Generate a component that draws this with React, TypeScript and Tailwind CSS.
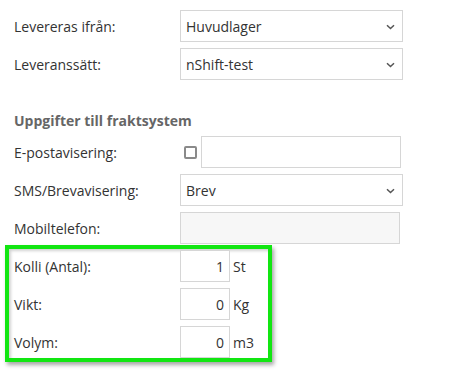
import React from 'react';

const font = { fontFamily: '"Open Sans", "Liberation Sans", sans-serif' };

function Chevron() {
  return (
    <svg width="9" height="6" viewBox="0 0 9 6" className="absolute right-[7px] top-[13px]">
      <path d="M1 1.2 L4.5 4.5 L8 1.2" fill="none" stroke="#555" strokeWidth="1.5" />
    </svg>
  );
}

function SelectBox({ value }: { value: string }) {
  return (
    <div className="relative flex h-8 w-[223px] items-center border border-[#d6d6d6] bg-white pl-[5px] text-[14px] text-[#333]">
      {value}
      <Chevron />
    </div>
  );
}

function Row({ label, children }: { label: string; children: React.ReactNode }) {
  return (
    <div className="flex h-8 items-center">
      <div className="w-[166px] text-[14px] text-[#333]">{label}</div>
      {children}
    </div>
  );
}

function NumRow({ label, value, unit }: { label: string; value: string; unit: string }) {
  return (
    <div className="flex h-8 items-center">
      <div className="w-[166px] text-[14px] text-[#333]">{label}</div>
      <div className="flex h-8 w-[50px] items-center justify-end border border-[#d6d6d6] bg-white pr-[5px] text-[14px] text-[#333]">
        {value}
      </div>
      <div className="ml-[3px] text-[14px] text-[#333]">{unit}</div>
    </div>
  );
}

export default function App() {
  return (
    <div style={font} className="h-[376px] w-[468px] bg-white pt-[10px]">
      <div className="flex flex-col gap-1.5 pl-[14px]">
        <Row label="Levereras ifrån:">
          <SelectBox value="Huvudlager" />
        </Row>
        <Row label="Leveranssätt:">
          <SelectBox value="nShift-test" />
        </Row>
      </div>

      <div className="mt-[31px] pl-[14px] text-[14px] font-bold leading-5 text-[#666]">
        Uppgifter till fraktsystem
      </div>

      <div className="mt-[5px] flex flex-col gap-1.5 pl-[14px]">
        <Row label="E-postavisering:">
          <div className="ml-[4px] h-[13px] w-[13px] rounded-[2px] border-2 border-[#8a8a8a] bg-white" />
          <div className="ml-[4px] h-8 w-[200px] border border-[#d6d6d6] bg-white" />
        </Row>
        <Row label="SMS/Brevavisering:">
          <SelectBox value="Brev" />
        </Row>
        <Row label="Mobiltelefon:">
          <div className="h-8 w-[220px] border border-[#d6d6d6] bg-[#f7f7f7]" />
        </Row>
      </div>

      <div className="ml-[5px] mt-px flex w-[267px] flex-col gap-1.5 border-4 border-[#12e612] pb-0 pl-[5px] pt-px shadow-[2px_3px_4px_rgba(0,0,0,0.35),inset_2px_2px_3px_rgba(0,0,0,0.18)]">
        <NumRow label="Kolli (Antal):" value="1" unit="St" />
        <NumRow label="Vikt:" value="0" unit="Kg" />
        <NumRow label="Volym:" value="0" unit="m3" />
      </div>
    </div>
  );
}
